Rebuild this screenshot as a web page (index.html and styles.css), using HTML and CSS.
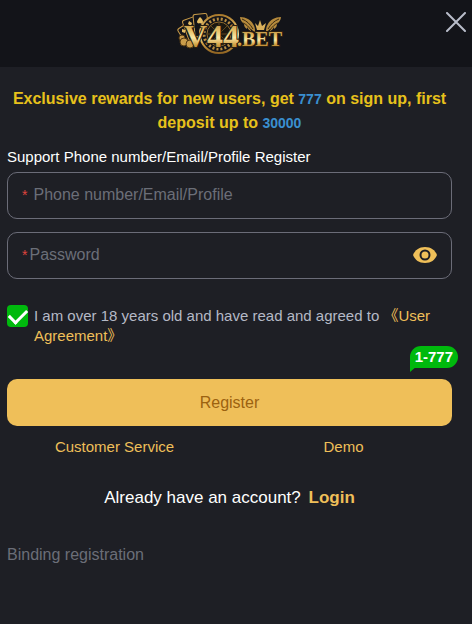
FILE: index.html
```html
<!DOCTYPE html>
<html lang="en">
<head>
  <meta charset="UTF-8" />
  <meta name="viewport" content="width=device-width, initial-scale=1.0"/>
  <title>V44.BET - Register</title>
  <link rel="stylesheet" href="styles.css">
</head>
<body>
  <header class="header">
    <svg class="logo" viewBox="0 0 108 48" role="img" aria-label="V44.BET">
      <defs>
        <linearGradient id="gold" x1="0" y1="0" x2="0" y2="1">
          <stop offset="0" stop-color="#a9792c"/>
          <stop offset="0.35" stop-color="#e6c068"/>
          <stop offset="0.55" stop-color="#fbe8a6"/>
          <stop offset="0.75" stop-color="#cf9d40"/>
          <stop offset="1" stop-color="#8f6322"/>
        </linearGradient>
      </defs>
      <!-- cards -->
      <g fill="#131419" stroke="#c99c4a" stroke-width="1">
        <rect x="5" y="17" width="12" height="18" rx="2" transform="rotate(-32 11 26)"/>
        <rect x="9" y="10" width="14" height="21" rx="2" transform="rotate(-20 16 20)"/>
        <rect x="18" y="6" width="14" height="22" rx="2" transform="rotate(-6 25 17)"/>
      </g>
      <g fill="#e3bd65">
        <path d="M24 9c2 2 3 3 3 5s-2 2-3 1c-1 1-3 0-3-1s1-3 3-5z"/>
        <path d="M13 13l3 2-1 3-3-2z"/>
        <path d="M6 21l3 1 0 3-3-1z"/>
      </g>
      <!-- chip -->
      <circle cx="43" cy="26" r="19" fill="#131419" stroke="url(#gold)" stroke-width="2"/>
      <circle cx="43" cy="26" r="15" fill="none" stroke="#b98d40" stroke-width="3" stroke-dasharray="2 2"/>
      <circle cx="43" cy="26" r="12" fill="#1a1710" stroke="#8f6a2c"/>
      <path d="M43 14v24M31 26h24M35 18l16 16M51 18l-16 16" stroke="#5f471e" stroke-width="1"/>
      <!-- coins -->
      <g fill="#c99c4a" stroke="#513812">
        <circle cx="6" cy="30" r="3"/>
        <circle cx="8" cy="34" r="4"/>
        <circle cx="14" cy="36" r="4"/>
      </g>
      <!-- wings and crown -->
      <g fill="#b58a3c">
        <path d="M64 9c6 0 11 3 13 7 2 3 2 5 2 8-2-1-3-2-4-3v2c-2-1-3-2-4-4v2c-2-1-3-3-3-5-2-2-4-4-4-7z"/>
        <path d="M105 9c-6 0-11 3-13 7-2 3-2 5-2 8 2-1 3-2 4-3v2c2-1 3-2 4-4v2c2-1 3-3 3-5 2-2 4-4 4-7z"/>
      </g>
      <path d="M66 11c5 2 8 5 11 10M67 15c3 1 6 4 8 7M103 11c-5 2-8 5-11 10M102 15c-3 1-6 4-8 7" fill="none" stroke="#3a2a12"/>
      <path d="M81 22l-2-7 3 3 2-6 2 6 4-3-2 7z" fill="#d9b05a"/>
      <text class="logo-big" x="8" y="39">V44</text>
      <text class="logo-small" x="61" y="38">.BET</text>
    </svg>
    <button class="close" type="button" aria-label="Close">
      <svg viewBox="0 0 20 20"><path d="M1 1l18 18M19 1L1 19"/></svg>
    </button>
  </header>

  <main class="content">
    <p class="promo">Exclusive rewards for new users, get <span>777</span> on sign up, first deposit up to <span>30000</span></p>

    <form class="form">
      <label class="form-title" for="account">Support Phone number/Email/Profile Register</label>
      <div class="field">
        <span class="required">*</span>
        <input class="account" id="account" type="text" placeholder="Phone number/Email/Profile">
      </div>
      <div class="field">
        <span class="required">*</span>
        <input id="password" type="password" placeholder="Password" aria-label="Password">
        <button class="eye" type="button" aria-label="Show password">
          <svg viewBox="0 0 24 16">
            <path d="M12 0C6 0 2 3 0 8c2 5 6 8 12 8s10-3 12-8C22 3 18 0 12 0z" fill="#efbf59"/>
            <circle cx="12" cy="8" r="4.500" fill="#efbf59" stroke="#1e1f25" stroke-width="2"/>
          </svg>
        </button>
      </div>

      <div class="agree">
        <input type="checkbox" id="agree" checked>
        <div class="agree-text">
          <label for="agree">I am over 18 years old and have read and agreed to</label>
          <a href="#agreement">《User Agreement》</a>
        </div>
      </div>

      <div class="submit">
        <button class="register" type="submit">Register</button>
        <span class="bonus">1-777</span>
      </div>
    </form>

    <nav class="links">
      <a href="#service">Customer Service</a>
      <a href="#demo">Demo</a>
    </nav>

    <p class="login">Already have an account? <a href="#login">Login</a></p>
    <p class="binding">Binding registration</p>
  </main>
</body>
</html>
```
FILE: styles.css
```css
* {
  box-sizing: border-box;
}

body {
  margin: 0;
  min-height: 100vh;
  background: #1e1f25;
  color: #fff;
  font-family: "Liberation Sans", Arial, "Noto Sans CJK SC", sans-serif;
  font-size: 15px;
  line-height: 20px;
}

p {
  margin: 0;
}

a {
  color: #efbf59;
  text-decoration: none;
}

button {
  border: none;
  padding: 0;
  background: none;
  font-family: inherit;
  cursor: pointer;
}

.header {
  display: grid;
  grid-template-columns: 1fr auto 1fr;
  align-items: start;
  padding: 8px 20px 11px 7px;
  background: #131419;
}

.logo {
  grid-column: 2;
  width: 108px;
  height: 48px;
}

.logo text {
  font-family: "Liberation Serif", serif;
  font-weight: bold;
  fill: url(#gold);
  stroke: #2a1f10;
  stroke-width: 2px;
  paint-order: stroke;
}

.logo-big {
  font-size: 32px;
}

.logo-small {
  font-size: 20px;
}

.close {
  justify-self: end;
  margin-top: 4px;
  margin-right: -14px;
  width: 20px;
  height: 20px;
}

.close svg {
  display: block;
  fill: none;
  stroke: #b9bdca;
  stroke-width: 2;
  stroke-linecap: round;
}

.content {
  padding: 20px 20px 20px 7px;
}

.promo {
  color: #e7c11b;
  font-size: 16px;
  font-weight: bold;
  line-height: 24px;
  text-align: center;
}

.promo span {
  color: #3a8fd0;
  font-size: 14px;
  line-height: 16px;
}

.form-title {
  display: block;
  margin-top: 12px;
}

.field {
  display: flex;
  align-items: center;
  height: 47px;
  margin-top: 5px;
  padding: 0 14px 2px;
  border: 1px solid #6b6c78;
  border-radius: 10px;
}

.field + .field {
  margin-top: 13px;
}

.required {
  color: #e0443e;
  font-size: 14px;
}

.field input {
  flex: 1;
  min-width: 0;
  padding: 0 2px;
  border: none;
  outline: none;
  background: none;
  color: #fff;
  font-family: inherit;
  font-size: 16px;
}

.field .account {
  padding-left: 6px;
}

.field input::placeholder {
  color: #6b6e78;
}

.eye {
  width: 24px;
  height: 16px;
}

.eye svg {
  display: block;
}

.agree {
  display: flex;
  gap: 6px;
  margin-top: 26px;
}

.agree input {
  appearance: none;
  flex: none;
  display: grid;
  place-items: center;
  width: 21px;
  height: 22px;
  margin: 0;
  border-radius: 4px;
  background: #00b90d;
}

.agree input:checked::before {
  content: "";
  width: 15px;
  height: 8px;
  border: solid #fff;
  border-width: 0 0 3px 3px;
  transform: translateY(-2px) rotate(-45deg);
}

.agree-text {
  padding-top: 1px;
  color: #b5b9c6;
}

.submit {
  position: relative;
  margin-top: 33px;
}

.register {
  display: block;
  width: 100%;
  height: 47px;
  border-radius: 10px;
  background: #efbf59;
  color: #9c6210;
  font-size: 16px;
}

/* bubble over the corner of the button */
.bonus {
  position: absolute;
  top: -33px;
  right: -6px;
  padding: 0 5px;
  border-radius: 11px 11px 11px 0;
  background: #00b90d;
  font-weight: bold;
  line-height: 22px;
}

.bonus::after {
  content: "";
  position: absolute;
  top: 20px;
  left: 0;
  border-top: 6px solid #00b90d;
  border-right: 7px solid transparent;
}

.links {
  display: flex;
  margin: 11px -6px 0 -7px;
}

.links a {
  flex: 1;
  text-align: center;
}

.login {
  margin-top: 31px;
  font-size: 17px;
  text-align: center;
}

.login a {
  margin-left: 3px;
  font-weight: bold;
}

.binding {
  margin-top: 37px;
  color: #6b6e78;
  font-size: 16px;
}
```
